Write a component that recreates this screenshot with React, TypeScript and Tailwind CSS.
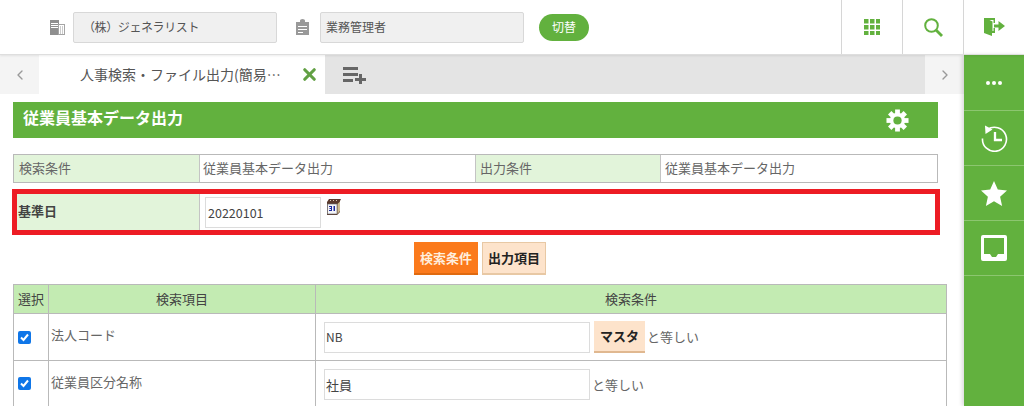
import React from "react";
import { ChevronLeft, ChevronRight, X } from "lucide-react";

const BuildingIcon = () => (
    <svg width="15" height="15" viewBox="0 0 15 15" className="shrink-0">
        <rect x="0" y="0" width="9" height="15" fill="#8f8f8f" />
        <rect x="8.500" y="4.500" width="6" height="10" fill="#fff" stroke="#a5a5a5" />
        <g fill="#fff">
            <rect x="1" y="3" width="7" height="1" />
            <rect x="1" y="5" width="7" height="1" />
            <rect x="1" y="7" width="7" height="1" />
        </g>
        <g fill="#999">
            {[6.500, 8.500, 10.500, 12.500].map((y) =>
                [10, 12].map((x) => <rect key={`${x}-${y}`} x={x} y={y} width="1" height="1" />)
            )}
        </g>
    </svg>
);

const ClipboardIcon = () => (
    <svg width="13" height="16" viewBox="0 0 13 16" className="shrink-0">
        <path d="M0 3h4V1.500a2.500 1.500 0 0 1 5 0V3h4v13H0z" fill="#999" />
        <g fill="#fff">
            <rect x="2" y="7" width="9" height="1" />
            <rect x="2" y="10" width="9" height="1" />
            <rect x="2" y="13" width="5" height="1" />
        </g>
    </svg>
);

const GridIcon = () => (
    <svg width="16" height="16" viewBox="0 0 16 16" fill="#62b13e">
        {[0, 6, 12].map((y) =>
            [0, 6, 12].map((x) => <rect key={`${x}-${y}`} x={x} y={y} width="4.500" height="4.500" />)
        )}
    </svg>
);

const SearchIcon = () => (
    <svg width="19" height="19" viewBox="0 0 19 19" fill="none" stroke="#62b13e">
        <circle cx="7.500" cy="7.500" r="6.300" strokeWidth="2" />
        <path d="M12 12l6 6" strokeWidth="2.800" />
    </svg>
);

const ExitIcon = () => (
    <svg width="21" height="18" viewBox="0 0 21 18" fill="#62b13e">
        <path d="M0 0h11v5H9.500V2H5.500l3 1.500V13h1V10H11v5H8v3l-8-3z" />
        <path d="M10 6.500h4.500V3L21 8l-6.500 5V9.500H10z" />
    </svg>
);

const ListPlusIcon = () => (
    <svg width="24" height="18" viewBox="0 0 24 18" fill="#666">
        <rect x="0" y="1" width="15" height="3" />
        <rect x="0" y="7" width="15" height="3" />
        <rect x="0" y="13" width="10" height="3" />
        <rect x="12" y="12" width="11" height="3" />
        <rect x="16" y="8" width="3" height="10" />
    </svg>
);

const GearIcon = () => (
    <svg width="23" height="23" viewBox="0 0 24 24">
        <g fill="#fff">
            {[0, 45, 90, 135].map((r) => (
                <rect key={r} x="9.500" y="0.500" width="5" height="23" transform={`rotate(${r} 12 12)`} />
            ))}
            <circle cx="12" cy="12" r="8" />
        </g>
        <circle cx="12" cy="12" r="4.300" fill="#62b13e" />
    </svg>
);

const HistoryIcon = () => (
    <svg width="27" height="27" viewBox="0 0 27 27" fill="none" stroke="#fff">
        <path d="M6.500 4.500A12 12 0 1 1 1.500 13.500" strokeWidth="1.600" />
        <path d="M4 0.500 11.500 4.500 4.500 9z" fill="#fff" stroke="none" />
        <path d="M14 7v8h7" strokeWidth="2.300" />
    </svg>
);

const StarIcon = () => (
    <svg width="26" height="25" viewBox="0 0 26 25" fill="#fff">
        <path d="M13 0l3.800 8.600 9.200 1-6.900 6.200 2 9.200-8.100-4.800L4.900 25l2-9.200L0 9.600l9.200-1z" />
    </svg>
);

const InboxIcon = () => (
    <svg width="26" height="26" viewBox="0 0 26 26">
        <path
            fillRule="evenodd"
            fill="#fff"
            d="M2 0h22a2 2 0 0 1 2 2v22a2 2 0 0 1-2 2H2a2 2 0 0 1-2-2V2a2 2 0 0 1 2-2zM3 3v16h6l2 3h4l2-3h6V3z"
        />
    </svg>
);

const CalendarIcon = () => (
    <svg width="15" height="16" viewBox="0 0 15 16" className="shrink-0">
        <path d="M3 0h12l-1 2v11l-3 3H1V3z" fill="#5b3a2e" />
        <g fill="#d8c8b8">
            <rect x="4" y="1" width="1" height="1" />
            <rect x="7" y="1" width="1" height="1" />
            <rect x="10" y="1" width="1" height="1" />
        </g>
        <rect x="1.500" y="5" width="9.500" height="10" fill="#f4f4f8" stroke="#666" strokeWidth="0.600" />
        <path d="M11.500 5 14 2.500V12l-2.500 3z" fill="#cdbb92" />
        <path d="M3 7h3v5H3v-1h2v-1H3.500V9H5V8H3z" fill="#1c2a9c" />
        <rect x="7.500" y="7" width="1.500" height="5" fill="#1c2a9c" />
    </svg>
);

const Check = () => (
    <span className="flex size-[13px] items-center justify-center rounded-[2px] bg-[#0f76e8]">
        <svg width="9" height="9" viewBox="0 0 9 9" fill="none" stroke="#fff" strokeWidth="2">
            <path d="M1 4.500 3.500 7 8 1.500" />
        </svg>
    </span>
);

function HeaderField({ icon, text, className }: { icon: React.ReactNode; text: string; className: string }) {
    return (
        <>
            {icon}
            <div className={`flex h-[31px] w-[204px] items-center rounded-[2px] border border-[#d8d8d8] bg-[#f0f0f0] text-[12px] text-[#555] ${className}`}>
                {text}
            </div>
        </>
    );
}

function SideButton({ children }: { children: React.ReactNode }) {
    return <div className="flex h-[55px] items-center justify-center border-b border-[#8cc670]">{children}</div>;
}

function TextBox({ value, className }: { value: string; className: string }) {
    return (
        <div className={`flex h-[31px] items-center border border-[#dcdcdc] bg-white px-[1px] text-[#444] ${className}`}>
            {value}
        </div>
    );
}

export default function App() {
    return (
        <div
            className="flex h-[406px] w-[1024px] flex-col overflow-hidden bg-white text-[13px] leading-[18px] text-[#666]"
            style={{ fontFamily: '"Noto Sans CJK JP", "Noto Sans", sans-serif' }}
        >
            <header className="z-10 flex h-[55px] shrink-0 items-center border-b border-[#dedede] pl-[50px] shadow-[0_1px_2px_rgba(0,0,0,0.08)]">
                <HeaderField icon={<BuildingIcon />} text="（株）ジェネラリスト" className="ml-[8px] mr-[19px] pl-[9px] tracking-[-0.4px]" />
                <HeaderField icon={<ClipboardIcon />} text="業務管理者" className="ml-[11px] pl-[5px]" />
                <button className="ml-[15px] h-[27px] w-[50px] rounded-full bg-[#62b13e] text-[12px] text-white">切替</button>
                <div className="ml-auto flex h-full">
                    <div className="flex w-[61px] items-center justify-center border-l border-[#d6d6d6]"><GridIcon /></div>
                    <div className="flex w-[61px] items-center justify-center border-l border-[#d6d6d6]"><SearchIcon /></div>
                    <div className="flex w-[61px] items-center justify-center border-l border-[#d6d6d6]"><ExitIcon /></div>
                </div>
            </header>

            <div className="flex min-h-0 flex-1">
                <main className="w-[964px] shrink-0">
                    <div className="flex h-[39px] bg-[#e4e4e4]">
                        <div className="flex w-[39px] items-center justify-center bg-[#f4f4f4]">
                            <ChevronLeft size={16} color="#999" />
                        </div>
                        <div className="flex w-[286px] items-center bg-white pl-[41px] text-[14px] text-[#555]">
                            <span className="w-[203px] whitespace-nowrap pb-[2px]">人事検索・ファイル出力(簡易…</span>
                            <X size={19} color="#62a044" strokeWidth={4} className="ml-[17px]" />
                        </div>
                        <div className="ml-[18px] flex items-center pt-[1px]"><ListPlusIcon /></div>
                        <div className="ml-auto flex w-[39px] items-center justify-center bg-[#f4f4f4]">
                            <ChevronRight size={16} color="#999" />
                        </div>
                    </div>

                    <div className="pl-[13px] pt-[8px]">
                        <div className="flex h-[36px] w-[925px] items-center justify-between bg-[#62b13e] pl-[10px] pr-[29px] text-[16px] font-bold text-white">
                            <span className="pb-[6px]">従業員基本データ出力</span>
                            <GearIcon />
                        </div>

                        <div className="mt-[16px] grid h-[29px] w-[925px] grid-cols-[186px_275px_186px_1fr] border border-[#b9b9b9]">
                            <div className="flex items-center border-r border-[#c4c4c4] bg-[#e2f4da] pb-[2px] pl-[5px]">検索条件</div>
                            <div className="flex items-center pb-[2px] pl-[3px]">従業員基本データ出力</div>
                            <div className="flex items-center border-x border-[#c4c4c4] bg-[#e2f4da] pb-[2px] pl-[4px]">出力条件</div>
                            <div className="flex items-center pb-[2px] pl-[4px]">従業員基本データ出力</div>
                        </div>

                        <div className="-ml-[1px] mt-[6px] flex h-[46px] w-[928px] border-[5px] border-[#ed1c24]">
                            <div className="flex w-[182px] items-center bg-[#e2f4da] pb-[2px] pl-[1px] font-bold text-[#444]">基準日</div>
                            <div className="flex flex-1 items-start border-l border-[#c4c4c4] pl-[5px] pt-[3px]">
                                <TextBox value="20220101" className="w-[116px] pl-[2px] pt-[1px] text-[12.5px]" />
                                <div className="ml-[5px] mt-[2px]"><CalendarIcon /></div>
                            </div>
                        </div>

                        <div className="mt-[7px] flex w-[925px] justify-center gap-[4px] pl-[9px] font-bold">
                            <button className="h-[33px] w-[64px] border-b-2 border-[#e06a10] bg-[#fb7a1c] text-[13px] text-[#ffeedd]">検索条件</button>
                            <button className="h-[33px] w-[64px] border border-b-2 border-[#e8c8a4] bg-[#fde3cb] text-[13px] text-[#222]">出力項目</button>
                        </div>

                        <div className="mt-[9px] w-[934px] border-x border-t border-[#b9b9b9]">
                            <div className="grid h-[29px] grid-cols-[35px_267px_1fr] border-b border-[#b9b9b9] bg-[#c3ebb2] text-[#444]">
                                <div className="flex items-center justify-center border-r border-[#b9b9b9] pb-[1px]">選択</div>
                                <div className="flex items-center justify-center border-r border-[#b9b9b9] pb-[1px]">検索項目</div>
                                <div className="flex items-center justify-center pb-[1px]">検索条件</div>
                            </div>
                            <div className="grid h-[47px] grid-cols-[35px_267px_1fr] border-b border-[#b9b9b9]">
                                <div className="flex items-center border-r border-[#b9b9b9] pl-[4px]"><Check /></div>
                                <div className="border-r border-[#b9b9b9] pl-[2px] pt-[12px]">法人コード</div>
                                <div className="flex items-center pl-[8px]">
                                    <TextBox value="NB" className="w-[266px] text-[12px]" />
                                    <button className="ml-[4px] h-[32px] w-[51px] border-b-2 border-[#e0b890] bg-[#fde3cb] font-bold text-[#222]">マスタ</button>
                                    <span className="ml-[2px]">と等しい</span>
                                </div>
                            </div>
                            <div className="grid h-[47px] grid-cols-[35px_267px_1fr]">
                                <div className="flex items-center border-r border-[#b9b9b9] pb-[2px] pl-[4px]"><Check /></div>
                                <div className="border-r border-[#b9b9b9] pl-[2px] pt-[12px]">従業員区分名称</div>
                                <div className="flex items-center pl-[8px]">
                                    <TextBox value="社員" className="w-[266px]" />
                                    <span className="ml-[2px]">と等しい</span>
                                </div>
                            </div>
                        </div>
                    </div>
                </main>

                <aside className="flex-1 bg-[#62b13e] pt-[1px] shadow-[-2px_0_4px_rgba(0,0,0,0.15)]">
                    <SideButton>
                        <div className="flex gap-[2px]">
                            <span className="size-[4px] rounded-full bg-white" />
                            <span className="size-[4px] rounded-full bg-white" />
                            <span className="size-[4px] rounded-full bg-white" />
                        </div>
                    </SideButton>
                    <SideButton><HistoryIcon /></SideButton>
                    <SideButton><StarIcon /></SideButton>
                    <SideButton><InboxIcon /></SideButton>
                </aside>
            </div>
        </div>
    );
}
